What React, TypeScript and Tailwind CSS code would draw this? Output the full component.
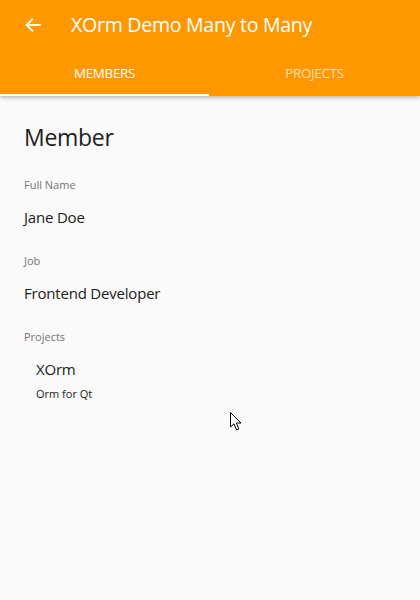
import React from "react";

export default function App() {
  const font = { fontFamily: '"Open Sans", "Noto Sans", sans-serif' };
  return (
    <div className="relative w-[420px] h-[600px] bg-[#fafafa] overflow-hidden" style={font}>
      <div className="bg-[#ff9800] shadow-[0_2px_4px_rgba(0,0,0,0.25)] relative z-10">
        <div className="h-[48px] flex items-center pt-[2px]">
          <div className="w-[71px] flex items-center pl-[24px]">
            <svg width="18" height="18" viewBox="0 0 24 24" fill="none" stroke="white" strokeWidth="2.6" strokeLinecap="square">
              <path d="M21 12H4" />
              <path d="M11 4.5L3.5 12L11 19.5" />
            </svg>
          </div>
          <span className="text-white text-[19.6px] tracking-[-0.3px]">XOrm Demo Many to Many</span>
        </div>
        <div className="h-[48px] flex">
          <div className="w-[209px] flex flex-col">
            <div className="flex-1 flex items-center justify-center pt-[4px] text-white text-[13.4px] tracking-[-0.3px]">MEMBERS</div>
            <div className="h-[2px] bg-white" />
          </div>
          <div className="flex-1 flex flex-col">
            <div className="flex-1 flex items-center justify-center pt-[4px] text-white/70 text-[13.4px] tracking-[-0.3px]">PROJECTS</div>
            <div className="h-[2px]" />
          </div>
        </div>
      </div>
      <div className="px-[24px] pt-[26px] flex flex-col">
        <div className="text-[23px] text-[#212121] leading-[30px] tracking-[-0.3px]">Member</div>
        <div className="mt-[25px] text-[11px] text-[#757575] leading-[16px]">Full Name</div>
        <div className="mt-[14px] text-[15px] text-[#212121] leading-[20px] tracking-[-0.2px]">Jane Doe</div>
        <div className="mt-[26px] text-[11px] text-[#757575] leading-[16px]">Job</div>
        <div className="mt-[14px] text-[15px] text-[#212121] leading-[20px] tracking-[-0.2px]">Frontend Developer</div>
        <div className="mt-[26px] text-[11px] text-[#757575] leading-[16px]">Projects</div>
        <div className="pl-[12px] mt-[14px] flex flex-col">
          <div className="text-[15px] text-[#212121] leading-[20px] tracking-[-0.2px]">XOrm</div>
          <div className="mt-[7px] text-[11px] text-[#212121] leading-[16px]">Orm for Qt</div>
        </div>
      </div>
      <svg className="absolute left-[230px] top-[412px]" width="13" height="20" viewBox="0 0 13 20">
        <path d="M0.5 0.5 L0.5 15 L4 11.8 L6.5 18 L8.8 17 L6.4 11 L11 11 Z" fill="white" stroke="black" strokeWidth="1" />
      </svg>
    </div>
  );
}
